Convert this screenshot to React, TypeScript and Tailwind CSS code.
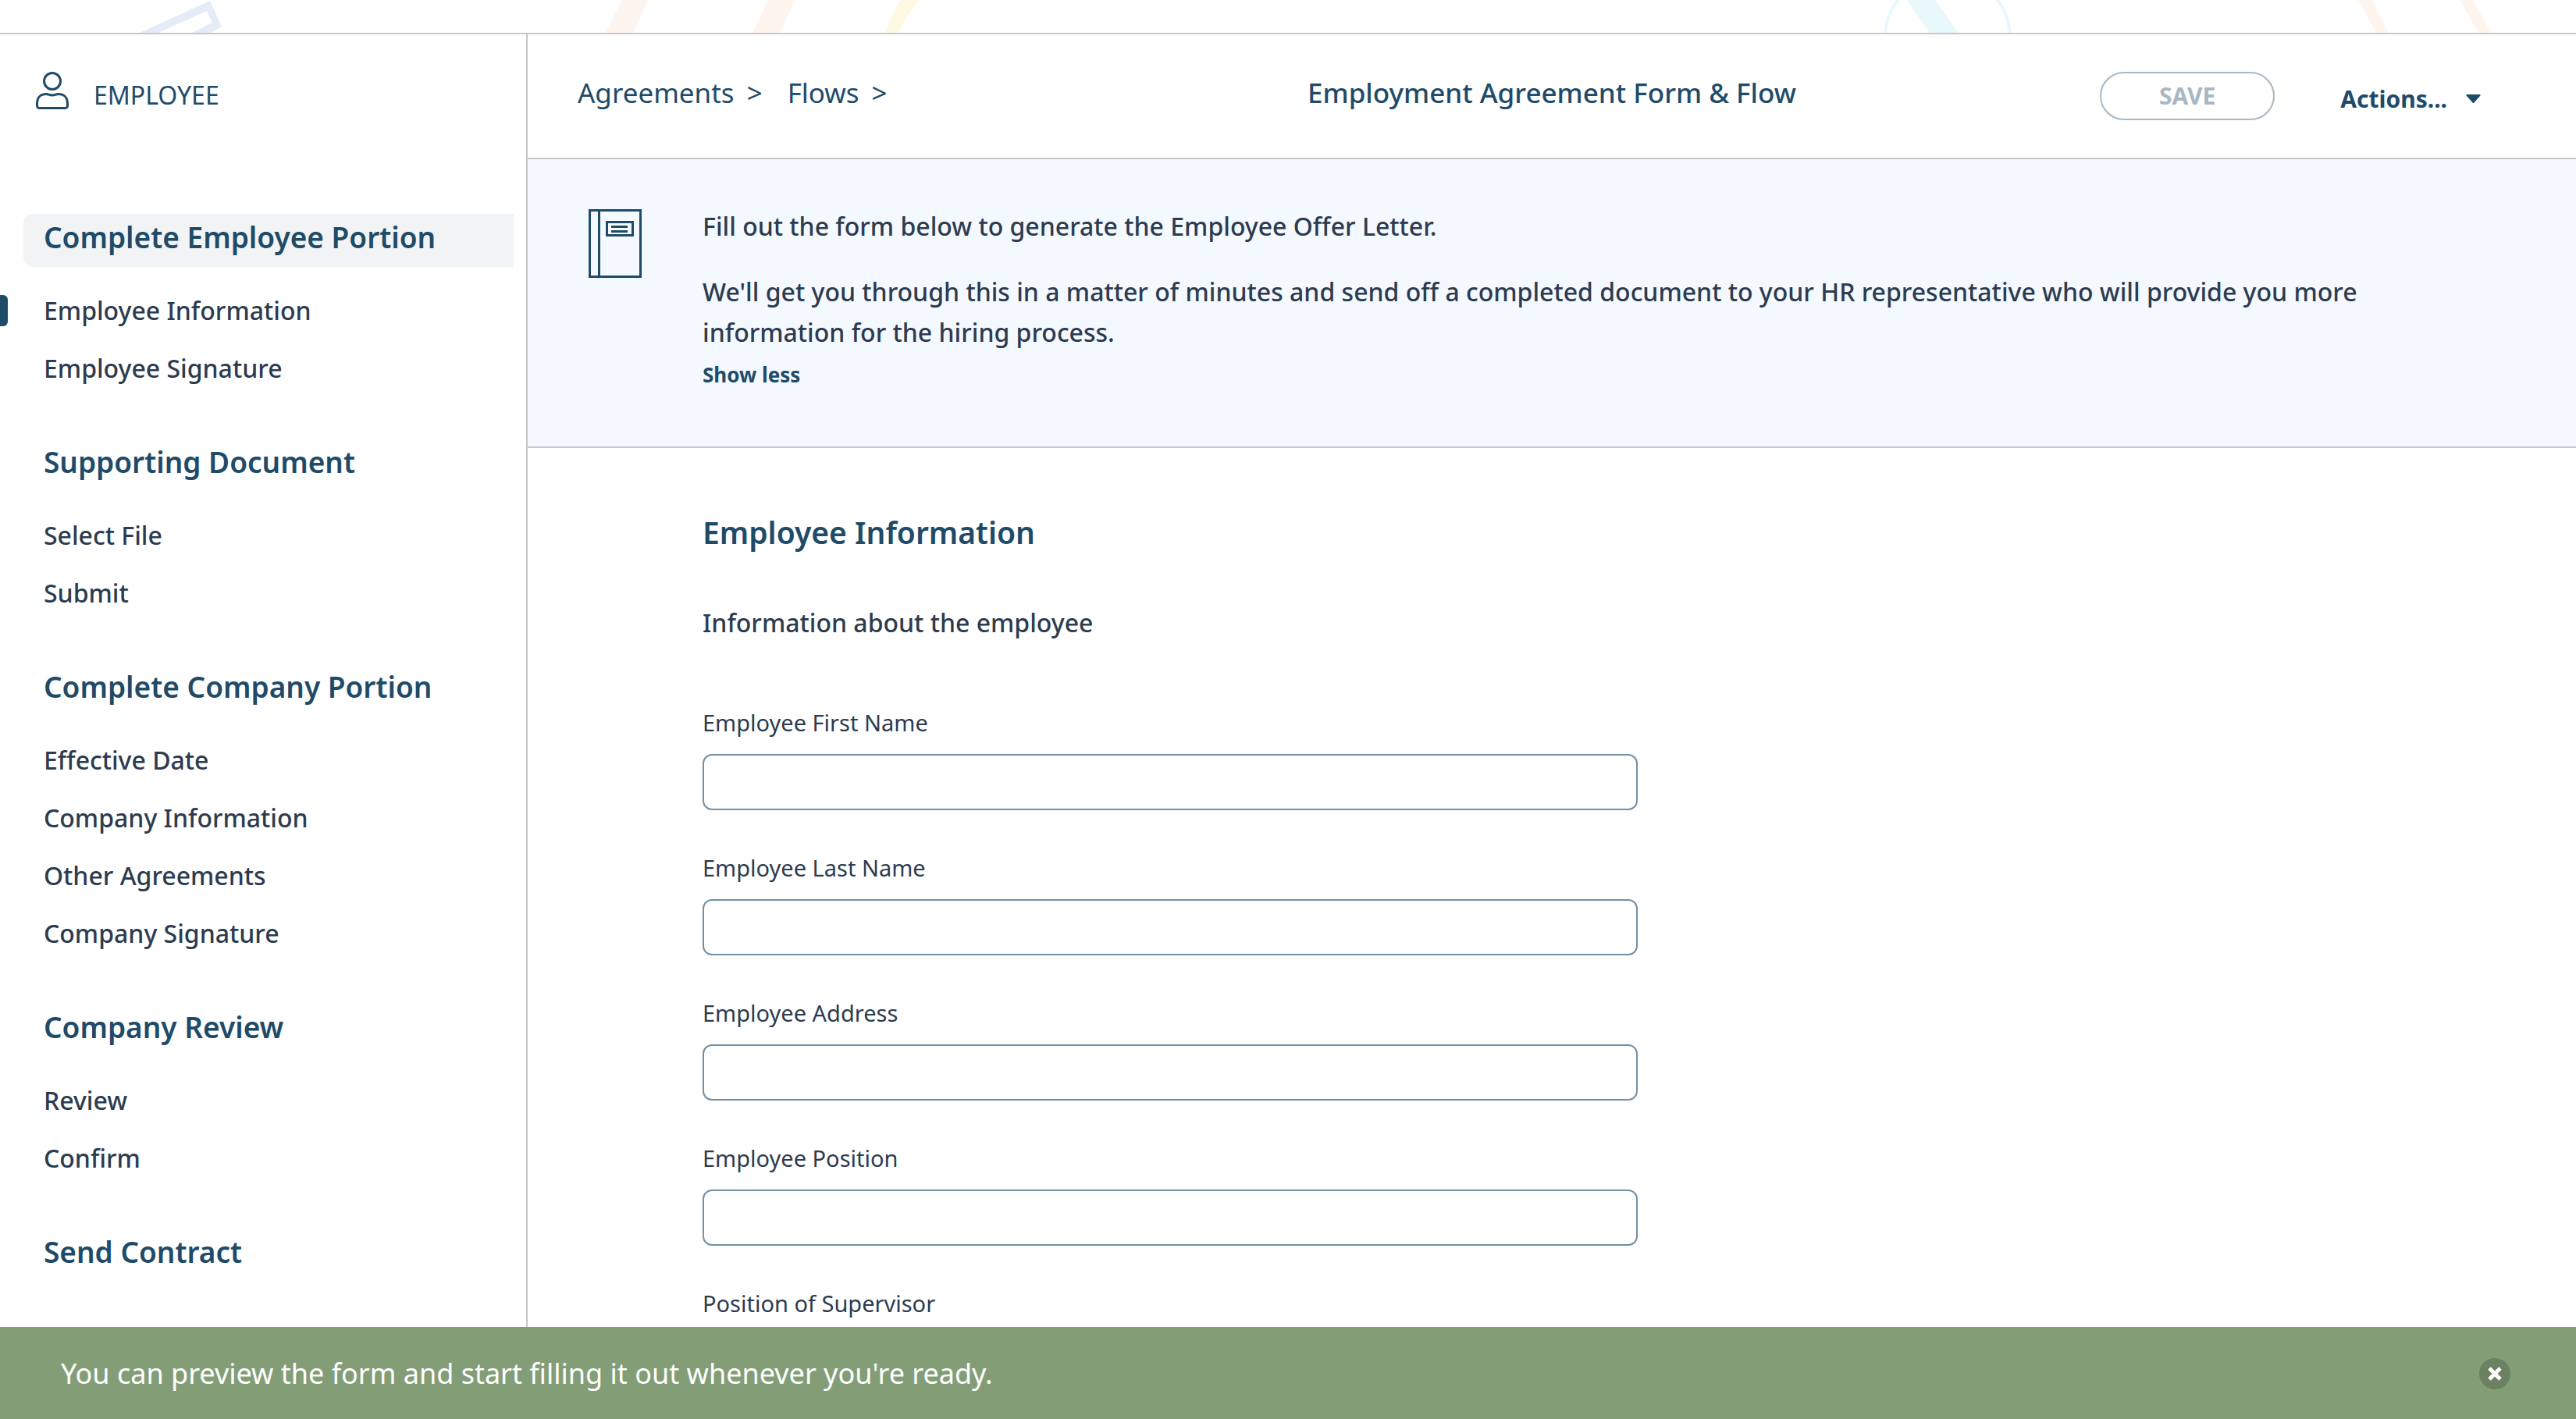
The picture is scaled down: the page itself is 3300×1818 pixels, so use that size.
import React from "react";

type Section = { title: string; items: string[]; current?: boolean };

const sections: Section[] = [
  {
    title: "Complete Employee Portion",
    items: ["Employee Information", "Employee Signature"],
    current: true,
  },
  { title: "Supporting Document", items: ["Select File", "Submit"] },
  {
    title: "Complete Company Portion",
    items: ["Effective Date", "Company Information", "Other Agreements", "Company Signature"],
  },
  { title: "Company Review", items: ["Review", "Confirm"] },
  { title: "Send Contract", items: [] },
];

const fields = [
  { id: "first-name", label: "Employee First Name" },
  { id: "last-name", label: "Employee Last Name" },
  { id: "address", label: "Employee Address" },
  { id: "position", label: "Employee Position" },
  { id: "supervisor", label: "Position of Supervisor" },
];

function Backdrop() {
  return (
    <div className="h-[42px] shrink-0 overflow-hidden" aria-hidden="true">
      <svg width="3300" height="42" viewBox="0 0 3300 42" className="max-w-none">
        <path
          fill="#e5ecf8"
          fillRule="evenodd"
          d="M179 42 269 1 284 34 270 42H246L272 29 265 14 203 42Z"
        />
        <path fill="#fef5ef" d="M797 0H830L811 42H776ZM984 0H1019L999 42H964Z" />
        <path fill="#fef9e3" d="M1154 0H1178Q1160 20 1151 42H1134Q1141 20 1154 0Z" />
        <circle cx="2495" cy="48" r="80" fill="none" stroke="#e8f8fb" strokeWidth="4" />
        <path fill="#e8f8fb" d="M2443 0H2479L2509 42H2472Z" />
        <path fill="#fef6ee" d="M3021 0H3039L3060 42H3044ZM3151 0H3168L3191 42H3175Z" />
      </svg>
    </div>
  );
}

function PersonIcon() {
  return (
    <svg width="42" height="48" viewBox="0 0 42 48" fill="none" stroke="currentColor" strokeWidth="3" aria-hidden="true">
      <circle cx="21" cy="12" r="10.5" />
      <path d="M1.5 41C1.5 33 6 28.5 13 28.5c3 0 4 1.5 8 1.5s5-1.5 8-1.5c7 0 11.5 4.5 11.5 12.5v2.5a3 3 0 0 1-3 3h-33a3 3 0 0 1-3-3z" />
    </svg>
  );
}

function BookIcon() {
  return (
    <svg width="68" height="88" viewBox="0 0 68 88" fill="none" stroke="currentColor" strokeWidth="3" className="mt-1 shrink-0" aria-hidden="true">
      <path d="M1.5 1.5H66.5V86.5H1.5ZM13.5 1.5V86.5M23.5 16.5H56.5V33.5H23.5ZM29 22.5H50M29 28.5H50" />
    </svg>
  );
}

function Sidebar() {
  return (
    <aside className="w-[676px] shrink-0 overflow-y-auto border-r-2 border-[#c8c8c8] pt-12 [scrollbar-width:none]">
      <div className="mb-[134px] flex items-end gap-8 pl-[46px] text-[#204b68]">
        <PersonIcon />
        <span className="text-[32px] leading-9">EMPLOYEE</span>
      </div>
      <nav className="flex flex-col gap-[53px]">
        {sections.map((section) => (
          <section key={section.title}>
            <h2
              className={
                section.current
                  ? "mb-[19px] ml-[30px] mr-4 rounded-l-xl bg-[#f1f3f5] pb-2 pl-[26px] text-[37px] font-semibold leading-[60px] text-[#204b68]"
                  : "mb-[19px] ml-[30px] mr-4 pb-2 pl-[26px] text-[37px] font-semibold leading-[60px] text-[#204b68]"
              }
            >
              {section.title}
            </h2>
            <ul>
              {section.items.map((item, i) => (
                <li key={item} className="flex h-[74px] items-center">
                  <span
                    className={
                      section.current && i === 0
                        ? "h-10 w-[10px] rounded-r-md bg-[#204b68]"
                        : "h-10 w-[10px]"
                    }
                  />
                  <a href="#" className="ml-[46px] text-[32px] font-medium leading-[74px]">
                    {item}
                  </a>
                </li>
              ))}
            </ul>
          </section>
        ))}
      </nav>
    </aside>
  );
}

function TopBar() {
  return (
    <header className="grid h-40 shrink-0 grid-cols-[1fr_auto_1fr] items-center border-b-2 border-[#c8c8c8] px-16 text-[#204b68]">
      <nav className="flex gap-8 pb-2 text-[35px] leading-[50px]">
        <span className="flex gap-4">
          <a href="#">Agreements</a>
          <span>&gt;</span>
        </span>
        <span className="flex gap-4">
          <a href="#">Flows</a>
          <span>&gt;</span>
        </span>
      </nav>
      <h1 className="pb-2 text-[35px] font-medium leading-[50px]">Employment Agreement Form &amp; Flow</h1>
      <div className="flex items-center justify-end gap-[84px] pr-[58px] font-bold">
        <button className="h-[62px] w-56 rounded-full border-2 border-[#a7b7c3] text-[30px] leading-10 text-[#a7b7c3]">
          SAVE
        </button>
        <button className="flex items-center gap-6 pt-2 text-[30px] leading-10">
          Actions...
          <svg width="19" height="12" viewBox="0 0 19 12" fill="currentColor" aria-hidden="true">
            <path d="M1.5 0H17.5Q19.5 .5 18 2L10.5 10.5Q9.5 11.5 8.5 10.5L1 2Q-.5 .5 1.5 0Z" />
          </svg>
        </button>
      </div>
    </header>
  );
}

function Intro() {
  return (
    <section className="flex gap-[78px] border-b-2 border-[#c8c8c8] bg-[#f4f8ff] pb-[72px] pl-[78px] pr-[120px] pt-[60px] text-[#204b68]">
      <BookIcon />
      <div>
        <div className="flex flex-col gap-8 text-[32px] font-medium leading-[52px] text-[#2d3b4f]">
          <p>Fill out the form below to generate the Employee Offer Letter.</p>
          <p>
            We'll get you through this in a matter of minutes and send off a completed document to your HR
            representative who will provide you more information for the hiring process.
          </p>
        </div>
        <button className="mt-2 block text-[26px] font-bold leading-10">Show less</button>
      </div>
    </section>
  );
}

function Form() {
  return (
    <form className="pl-56 pr-[120px] pt-20">
      <h2 className="text-[39px] font-semibold leading-[56px] text-[#204b68]">Employee Information</h2>
      <p className="mb-[82px] mt-[62px] text-[32px] font-medium leading-[52px]">
        Information about the employee
      </p>
      <div className="flex max-w-[1198px] flex-col gap-[54px]">
        {fields.map((field) => (
          <div key={field.id} className="flex flex-col gap-5">
            <label htmlFor={field.id} className="text-[29px] leading-10">
              {field.label}
            </label>
            <input
              id={field.id}
              type="text"
              className="h-[72px] w-full rounded-xl border-2 border-[#7390a4] bg-white px-5 text-[29px]"
            />
          </div>
        ))}
      </div>
    </form>
  );
}

function Notice() {
  return (
    <div className="flex h-[118px] shrink-0 items-center justify-between bg-[#839e77] pl-[78px] pr-[84px] pt-[2px] text-white">
      <p className="text-[36px] leading-[50px]">
        You can preview the form and start filling it out whenever you're ready.
      </p>
      <button aria-label="Dismiss" className="flex size-10 items-center justify-center rounded-full bg-[#6b8161]">
        <svg width="18" height="18" viewBox="0 0 18 18" stroke="currentColor" strokeWidth="5" aria-hidden="true">
          <path d="M2 2 16 16M16 2 2 16" />
        </svg>
      </button>
    </div>
  );
}

export default function App() {
  return (
    <div className="flex h-screen flex-col bg-white font-['Noto_Sans',sans-serif] text-[#2d3b4f]">
      <Backdrop />
      <div className="flex min-h-0 flex-1 border-t-2 border-[#c8c8c8]">
        <Sidebar />
        <main className="flex min-w-0 flex-1 flex-col">
          <TopBar />
          <div className="min-h-0 flex-1 overflow-y-auto [scrollbar-width:none]">
            <Intro />
            <Form />
          </div>
        </main>
      </div>
      <Notice />
    </div>
  );
}
